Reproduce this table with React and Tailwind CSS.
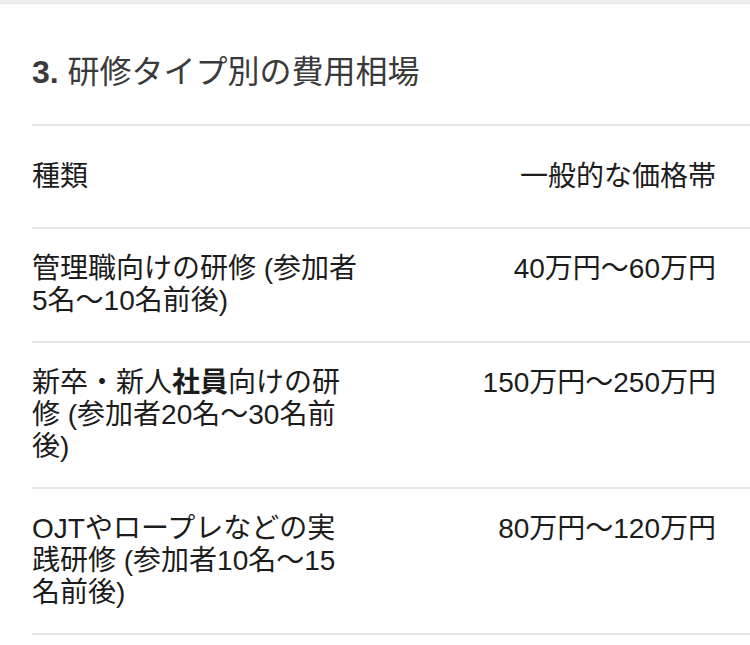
import React from 'react';

const rows = [
  {
    id: 'manager',
    name: (
      <>
        管理職向けの研修 (参加者
        <br />
        5名〜10名前後)
      </>
    ),
    price: '40万円〜60万円',
  },
  {
    id: 'newgrad',
    name: (
      <>
        新卒・新人<span className="font-bold">社員</span>向けの研
        <br />
        修 (参加者20名〜30名前
        <br />
        後)
      </>
    ),
    price: '150万円〜250万円',
  },
  {
    id: 'ojt',
    name: (
      <>
        OJTやロープレなどの実
        <br />
        践研修 (参加者10名〜15
        <br />
        名前後)
      </>
    ),
    price: '80万円〜120万円',
  },
];

export default function App() {
  return (
    <div
      className="w-[750px] h-[645px] overflow-hidden bg-white"
      style={{ fontFamily: '"Liberation Sans", "Noto Sans CJK JP", sans-serif' }}
    >
      <div className="h-[4px] bg-[#eeeff1] border-b border-[#e4e5e8]" />

      <div className="pl-[32px]">
        <h2 className="mt-[48px] mb-[32px] text-[32px] leading-[40px] font-normal text-[#3a3a3a]">
          <span className="font-bold">3.</span> 研修タイプ別の費用相場
        </h2>

        <div className="border-t-2 border-[#e6e6e6] text-[28px] leading-[32px] text-[#1c1c1c]">
          <div className="flex border-b-2 border-[#e6e6e6] pt-[35px] pb-[34px]">
            <div className="w-[380px]">種類</div>
            <div className="flex-1 text-right pr-[34px]">一般的な価格帯</div>
          </div>

          {rows.map((r) => (
            <div key={r.id} className="flex border-b-2 border-[#e6e6e6] py-[24px]">
              <div className="w-[380px] whitespace-nowrap">{r.name}</div>
              <div className="flex-1 text-right pr-[34px]">{r.price}</div>
            </div>
          ))}
        </div>
      </div>
    </div>
  );
}
